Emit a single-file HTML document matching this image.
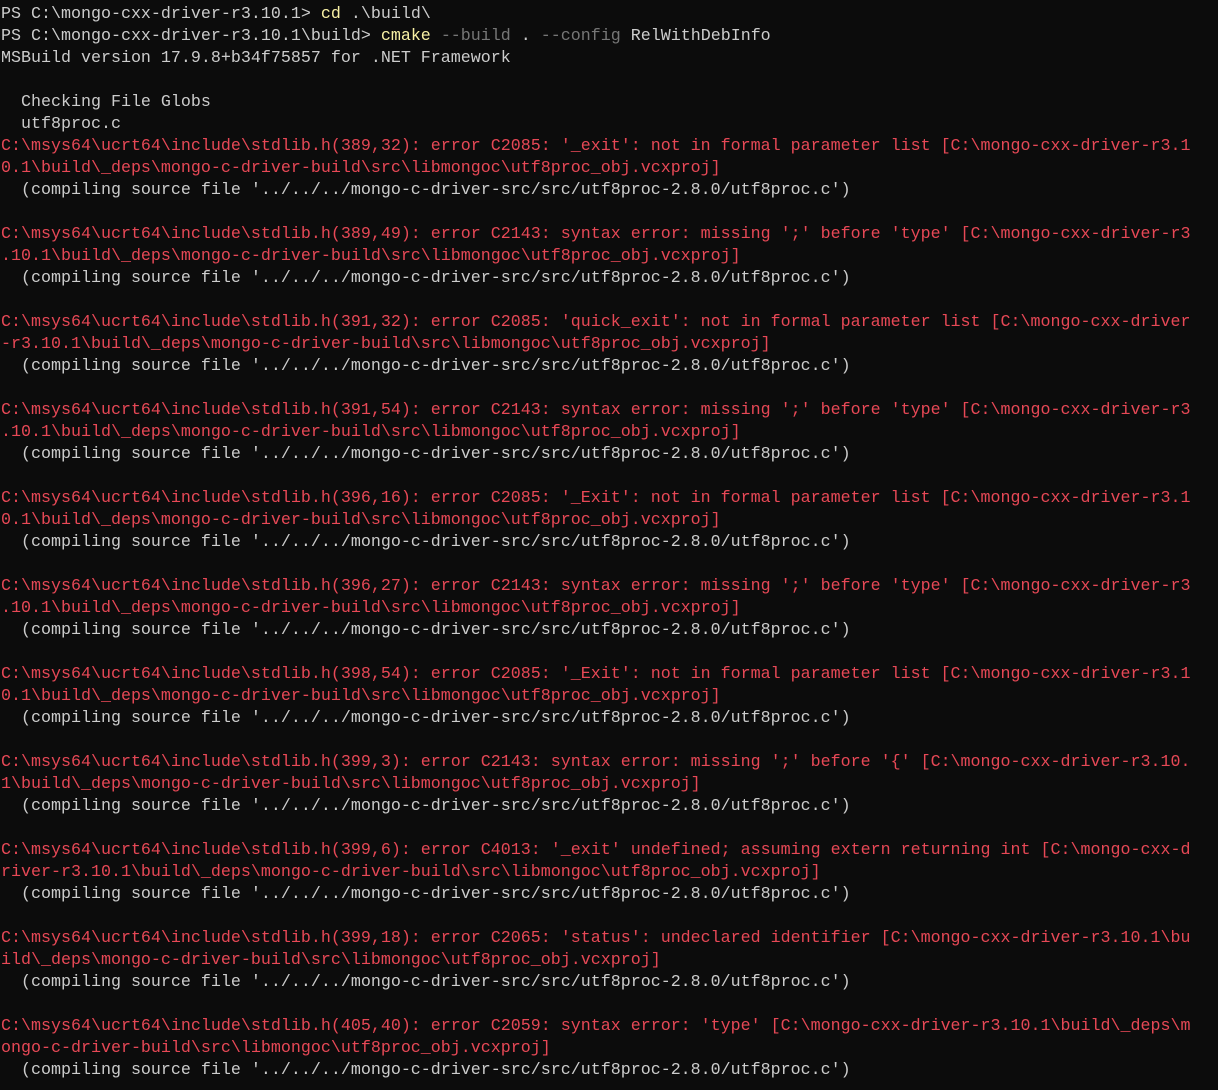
<!DOCTYPE html>
<html><head><meta charset="utf-8"><style>
html,body{margin:0;padding:0;background:#0c0c0c;width:1218px;height:1090px;overflow:hidden}
pre{margin:0;position:absolute;top:4px;left:1px;font-family:"Liberation Mono",monospace;font-size:16.67px;line-height:22px;color:#cccccc;white-space:pre}
.r{color:#e74856}.y{color:#f9f1a5}.g{color:#767676}
</style></head><body><pre>PS C:\mongo-cxx-driver-r3.10.1&gt; <span class="y">cd</span> .\build\
PS C:\mongo-cxx-driver-r3.10.1\build&gt; <span class="y">cmake</span> <span class="g">--build</span> . <span class="g">--config</span> RelWithDebInfo
MSBuild version 17.9.8+b34f75857 for .NET Framework

  Checking File Globs
  utf8proc.c
<span class="r">C:\msys64\ucrt64\include\stdlib.h(389,32): error C2085: '_exit': not in formal parameter list [C:\mongo-cxx-driver-r3.1
0.1\build\_deps\mongo-c-driver-build\src\libmongoc\utf8proc_obj.vcxproj]</span>
  (compiling source file '../../../mongo-c-driver-src/src/utf8proc-2.8.0/utf8proc.c')

<span class="r">C:\msys64\ucrt64\include\stdlib.h(389,49): error C2143: syntax error: missing ';' before 'type' [C:\mongo-cxx-driver-r3
.10.1\build\_deps\mongo-c-driver-build\src\libmongoc\utf8proc_obj.vcxproj]</span>
  (compiling source file '../../../mongo-c-driver-src/src/utf8proc-2.8.0/utf8proc.c')

<span class="r">C:\msys64\ucrt64\include\stdlib.h(391,32): error C2085: 'quick_exit': not in formal parameter list [C:\mongo-cxx-driver
-r3.10.1\build\_deps\mongo-c-driver-build\src\libmongoc\utf8proc_obj.vcxproj]</span>
  (compiling source file '../../../mongo-c-driver-src/src/utf8proc-2.8.0/utf8proc.c')

<span class="r">C:\msys64\ucrt64\include\stdlib.h(391,54): error C2143: syntax error: missing ';' before 'type' [C:\mongo-cxx-driver-r3
.10.1\build\_deps\mongo-c-driver-build\src\libmongoc\utf8proc_obj.vcxproj]</span>
  (compiling source file '../../../mongo-c-driver-src/src/utf8proc-2.8.0/utf8proc.c')

<span class="r">C:\msys64\ucrt64\include\stdlib.h(396,16): error C2085: '_Exit': not in formal parameter list [C:\mongo-cxx-driver-r3.1
0.1\build\_deps\mongo-c-driver-build\src\libmongoc\utf8proc_obj.vcxproj]</span>
  (compiling source file '../../../mongo-c-driver-src/src/utf8proc-2.8.0/utf8proc.c')

<span class="r">C:\msys64\ucrt64\include\stdlib.h(396,27): error C2143: syntax error: missing ';' before 'type' [C:\mongo-cxx-driver-r3
.10.1\build\_deps\mongo-c-driver-build\src\libmongoc\utf8proc_obj.vcxproj]</span>
  (compiling source file '../../../mongo-c-driver-src/src/utf8proc-2.8.0/utf8proc.c')

<span class="r">C:\msys64\ucrt64\include\stdlib.h(398,54): error C2085: '_Exit': not in formal parameter list [C:\mongo-cxx-driver-r3.1
0.1\build\_deps\mongo-c-driver-build\src\libmongoc\utf8proc_obj.vcxproj]</span>
  (compiling source file '../../../mongo-c-driver-src/src/utf8proc-2.8.0/utf8proc.c')

<span class="r">C:\msys64\ucrt64\include\stdlib.h(399,3): error C2143: syntax error: missing ';' before '{' [C:\mongo-cxx-driver-r3.10.
1\build\_deps\mongo-c-driver-build\src\libmongoc\utf8proc_obj.vcxproj]</span>
  (compiling source file '../../../mongo-c-driver-src/src/utf8proc-2.8.0/utf8proc.c')

<span class="r">C:\msys64\ucrt64\include\stdlib.h(399,6): error C4013: '_exit' undefined; assuming extern returning int [C:\mongo-cxx-d
river-r3.10.1\build\_deps\mongo-c-driver-build\src\libmongoc\utf8proc_obj.vcxproj]</span>
  (compiling source file '../../../mongo-c-driver-src/src/utf8proc-2.8.0/utf8proc.c')

<span class="r">C:\msys64\ucrt64\include\stdlib.h(399,18): error C2065: 'status': undeclared identifier [C:\mongo-cxx-driver-r3.10.1\bu
ild\_deps\mongo-c-driver-build\src\libmongoc\utf8proc_obj.vcxproj]</span>
  (compiling source file '../../../mongo-c-driver-src/src/utf8proc-2.8.0/utf8proc.c')

<span class="r">C:\msys64\ucrt64\include\stdlib.h(405,40): error C2059: syntax error: 'type' [C:\mongo-cxx-driver-r3.10.1\build\_deps\m
ongo-c-driver-build\src\libmongoc\utf8proc_obj.vcxproj]</span>
  (compiling source file '../../../mongo-c-driver-src/src/utf8proc-2.8.0/utf8proc.c')
</pre></body></html>
